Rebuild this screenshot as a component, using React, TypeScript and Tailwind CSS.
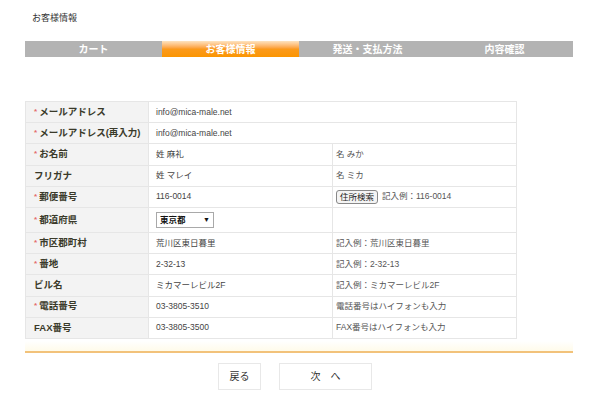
import React from 'react'

const font = { fontFamily: '"Liberation Sans", "Noto Sans CJK JP", sans-serif' }

const steps = ['カート', 'お客様情報', '発送・支払方法', '内容確認']

type Row = {
  label: string
  required?: boolean
  value?: React.ReactNode
  note?: React.ReactNode
  wide?: boolean
  tall?: boolean
}

function Req() {
  return <span className="text-[#e46a6a] text-[8px] mr-[2px] relative -top-[1px]">*</span>
}

const rows: Row[] = [
  { label: 'メールアドレス', required: true, value: 'info@mica-male.net', wide: true },
  { label: 'メールアドレス(再入力)', required: true, value: 'info@mica-male.net', wide: true },
  { label: 'お名前', required: true, value: '姓 麻礼', note: '名 みか' },
  { label: 'フリガナ', value: '姓 マレイ', note: '名 ミカ' },
  {
    label: '郵便番号',
    required: true,
    value: '116-0014',
    note: (
      <span className="flex items-center gap-[4px]">
        <span className="border border-[#888] rounded-[3px] bg-[#f4f4f4] px-[3px] leading-[12px] text-[#222]">住所検索</span>
        <span>記入例：116-0014</span>
      </span>
    ),
  },
  {
    label: '都道府県',
    required: true,
    tall: true,
    value: (
      <span className="inline-flex items-center justify-between w-[58px] h-[16px] border border-[#a9a9a9] px-[3px] bg-white text-[#111] font-bold">
        <span>東京都</span>
        <span className="text-[7px]">▼</span>
      </span>
    ),
    note: '',
  },
  { label: '市区郡町村', required: true, value: '荒川区東日暮里', note: '記入例：荒川区東日暮里' },
  { label: '番地', required: true, value: '2-32-13', note: '記入例：2-32-13' },
  { label: 'ビル名', value: 'ミカマーレビル2F', note: '記入例：ミカマーレビル2F' },
  { label: '電話番号', required: true, value: '03-3805-3510', note: '電話番号はハイフォンも入力' },
  { label: 'FAX番号', value: '03-3805-3500', note: 'FAX番号はハイフォンも入力' },
]

export default function App() {
  return (
    <div className="w-[601px] h-[413px] bg-white text-[#333] overflow-hidden" style={font}>
      <div className="pl-[32px] pt-[12px] text-[9px] leading-[12px]">お客様情報</div>

      <div className="mx-[25px] mt-[17px] w-[548px] flex h-[16px]">
        {steps.map((s, i) => (
          <div
            key={s}
            className={
              'flex-1 flex items-center justify-center text-[10px] font-bold text-white ' +
              (i === 1 ? 'bg-gradient-to-b from-[#fde3bf] via-[#fb9a1a] to-[#fb9500]' : 'bg-[#b3b3b3]')
            }
          >
            {s}
          </div>
        ))}
      </div>

      <div className="mx-[25px] mt-[44px] w-[548px]">
        <table className="w-[492px] border-collapse text-[8.5px]">
          <tbody>
            {rows.map((r) => (
              <tr key={r.label} className={r.tall ? 'h-[25px]' : 'h-[21.2px]'}>
                <td className="w-[123px] bg-[#f3f3f3] border border-[#e6e6e6] pl-[8px] text-[9.5px] font-bold text-[#3a3a2a] whitespace-nowrap">
                  {r.required && <Req />}
                  {r.label}
                </td>
                <td
                  colSpan={r.wide ? 2 : 1}
                  className="w-[184px] border border-[#e6e6e6] pl-[7px] text-[#444]"
                >
                  {r.value}
                </td>
                {!r.wide && (
                  <td className="border border-[#e6e6e6] pl-[3px] text-[#555]">{r.note}</td>
                )}
              </tr>
            ))}
          </tbody>
        </table>

        <div className="mt-[2px] h-[10px] bg-gradient-to-b from-white to-[#fffbea]" />
        <div className="h-[2px] bg-[#f2c27a]" />

        <div className="flex justify-start gap-[18px] pl-[193px] mt-[10px]">
          <div className="w-[43px] h-[27px] border border-[#e8e8e8] flex items-center justify-center text-[10px] text-[#333]">
            戻る
          </div>
          <div className="w-[93px] h-[27px] border border-[#e8e8e8] flex items-center justify-center text-[10px] text-[#333]">
            次　へ
          </div>
        </div>
      </div>
    </div>
  )
}
